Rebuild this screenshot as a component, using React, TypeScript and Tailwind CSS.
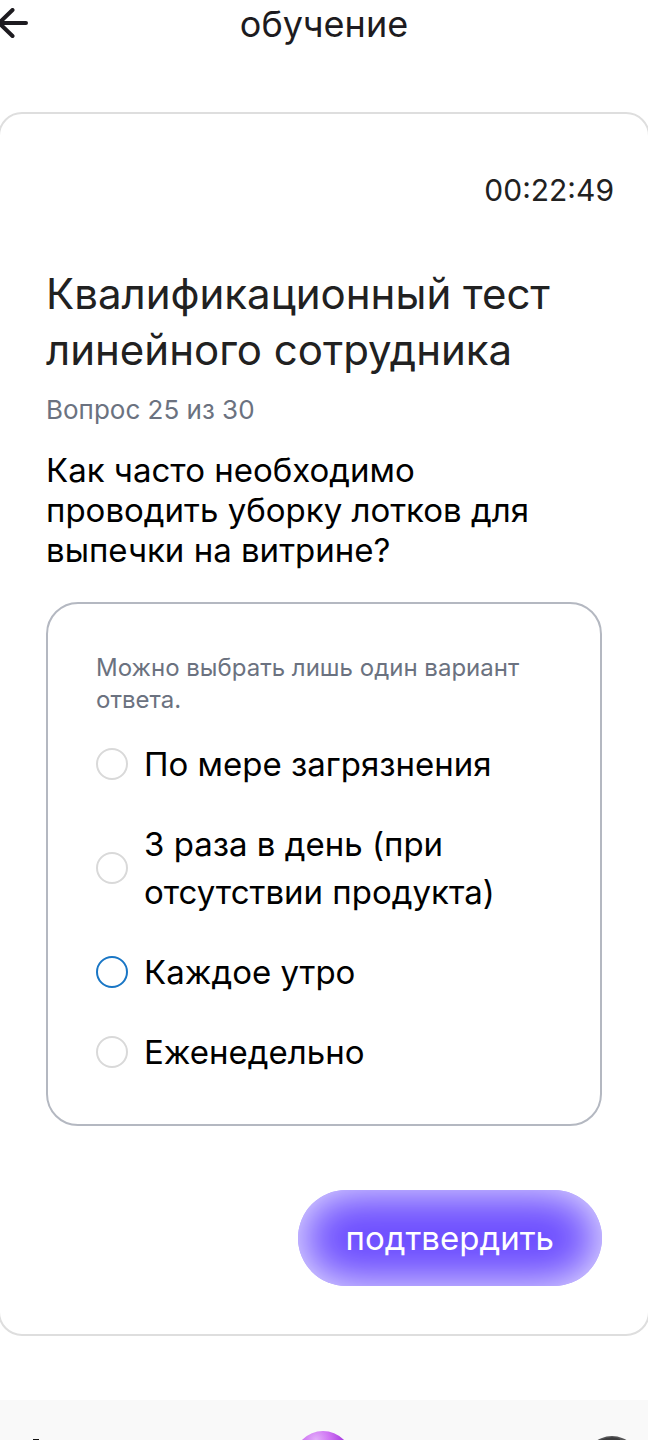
import React from 'react';

const answers = [
  { id: "a1", label: "По мере загрязнения" },
  { id: "a2", label: "3 раза в день (при отсутствии продукта)" },
  { id: "a3", label: "Каждое утро", focused: true },
  { id: "a4", label: "Еженедельно" }
];

const Header = () => {
  return (
    <header className="grid grid-cols-[1fr_auto_1fr] items-center h-12 mb-16">
      <button aria-label="Назад" className="-ml-1 w-8 h-8">
        <svg viewBox="0 0 32 32" className="w-8 h-8" fill="none" stroke="#1d1b20" strokeWidth="4" strokeLinecap="round" strokeLinejoin="round">
          <path d="M30 15H3M16.500 2L3 15l13.500 13" />
        </svg>
      </button>
      <h1 className="text-4xl leading-10 text-[#1d1b20]">обучение</h1>
    </header>
  );
};

const Answers = () => {
  return (
    <fieldset className="border-2 border-[#b4b8c1] rounded-[32px] p-12 min-w-0">
      <p className="text-2xl leading-8 text-[#6b7280] mb-6">Можно выбрать лишь один вариант ответа.</p>
      <div className="flex flex-col gap-8">
        {answers.map((answer) => (
          <label key={answer.id} htmlFor={answer.id} className="flex items-center gap-4 text-[33px] leading-[48px] text-black">
            <input
              type="radio"
              id={answer.id}
              name="answer"
              className={`appearance-none shrink-0 w-8 h-8 rounded-full border-2 bg-white ${answer.focused ? "border-[#1976c5]" : "border-[#d9d9d9]"}`}
            />
            <span>{answer.label}</span>
          </label>
        ))}
      </div>
    </fieldset>
  );
};

const BottomNav = () => {
  return (
    <nav className="flex justify-between h-10 px-2 overflow-hidden bg-[#f9f9f9]">
      <a href="#home" aria-label="Главная" className="w-14 shrink-0">
        <svg viewBox="0 0 56 40" className="w-14 h-10">
          <path d="M25 40v-1h6v1z" fill="#111111" />
        </svg>
      </a>
      <a href="#assistant" aria-label="Помощник" className="w-16 shrink-0">
        <svg viewBox="0 0 64 40" className="w-16 h-10">
          <defs>
            <radialGradient id="ball" gradientUnits="userSpaceOnUse" cx="24" cy="40" r="28">
              <stop offset="0" stopColor="#e3b0fa" />
              <stop offset="0.500" stopColor="#cf74f3" />
              <stop offset="1" stopColor="#a83de0" />
            </radialGradient>
          </defs>
          <circle cx="31" cy="60" r="29" fill="url(#ball)" />
        </svg>
      </a>
      <a href="#profile" aria-label="Профиль" className="w-14 shrink-0">
        <svg viewBox="0 0 56 40" className="w-14 h-10">
          <circle cx="28" cy="64" r="28" fill="#555557" />
          <path d="M16 40q12-5 20-1v1z" fill="#3c3c3e" />
        </svg>
      </a>
    </nav>
  );
};

const App = () => {
  return (
    <div className="bg-white overflow-hidden font-['Inter','Noto_Sans',sans-serif]">
      <Header />
      <main className="-mx-0.5 mb-16 px-[46px] py-12 border-2 border-[#dedede] rounded-3xl">
        <div className="-mr-3 mt-2 mb-14 text-right text-3xl leading-10 text-[#212121]">
          <time>00:22:49</time>
        </div>
        <h2 className="text-[42px] leading-[56px] text-[#212121] mb-4">
          Квалификационный тест линейного сотрудника
        </h2>
        <p className="text-[26px] leading-8 text-[#6b7280] mb-6">Вопрос 25 из 30</p>
        <p className="text-[33px] leading-10 text-black pr-8 mb-8">
          Как часто необходимо проводить уборку лотков для выпечки на витрине?
        </p>
        <Answers />
        <div className="flex justify-end mt-16">
          <button className="h-24 px-12 rounded-full bg-[#6c4dff] text-white text-[33px] leading-10 shadow-[inset_0_0_48px_rgba(255,255,255,0.95)]">
            подтвердить
          </button>
        </div>
      </main>
      <BottomNav />
    </div>
  );
};

export default App;
